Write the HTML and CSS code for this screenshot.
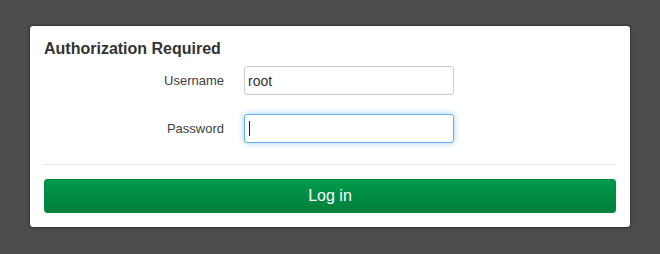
FILE: index.html
```html
<!DOCTYPE html>
<html>
<head>
<meta charset="utf-8">
<link rel="stylesheet" href="styles.css">
</head>
<body>
<div class="card">
  <h3 class="title">Authorization Required</h3>
  <div class="form">
    <label class="label" for="u">Username</label>
    <input class="field" id="u" type="text" value="root">
    <label class="label" for="p">Password</label>
    <div class="field-wrap">
      <input class="field focused" id="p" type="password">
      <span class="caret"></span>
    </div>
  </div>
  <div class="divider"></div>
  <button class="btn">Log in</button>
</div>
</body>
</html>
```
FILE: styles.css
```css
html, body {
  margin: 0;
  padding: 0;
}
body {
  background: #4c4c4c;
  font-family: "Liberation Sans", Arial, sans-serif;
  width: 660px;
  height: 254px;
  overflow: hidden;
}
.card {
  box-sizing: border-box;
  margin: 26px 0 0 30px;
  width: 600px;
  height: 201px;
  background: #fff;
  border-radius: 3px;
  box-shadow: 0 0 2px 1px rgba(0,0,0,0.35);
  padding: 13px 14px 13px;
}
.title {
  margin: 0;
  font-size: 16px;
  line-height: 20px;
  font-weight: bold;
  color: #333;
}
.form {
  margin-top: 7px;
  display: grid;
  grid-template-columns: 180px 210px;
  column-gap: 20px;
  row-gap: 19px;
  align-items: center;
}
.label {
  text-align: right;
  font-size: 13px;
  color: #404040;
}
.field-wrap {
  position: relative;
  height: 29px;
}
.field {
  box-sizing: border-box;
  display: block;
  width: 210px;
  height: 29px;
  margin: 0;
  padding: 0 3px;
  border: 1px solid #ccc;
  border-radius: 3px;
  font-family: "Liberation Sans", Arial, sans-serif;
  font-size: 14px;
  color: #333;
  background: #fff;
  outline: none;
}
.field.focused {
  border-color: #66afe9;
  box-shadow: 0 0 6px rgba(102,175,233,0.6);
}
.caret {
  position: absolute;
  left: 5px;
  top: 7px;
  width: 1px;
  height: 15px;
  background: #222;
}
.divider {
  margin-top: 21px;
  height: 1px;
  background: #e6e6e6;
}
.btn {
  display: block;
  box-sizing: border-box;
  margin-top: 14px;
  width: 100%;
  height: 34px;
  border: 1px solid #008c42;
  border-radius: 3px;
  background: linear-gradient(#009b4b, #007e3a);
  color: #fff;
  font-family: "Liberation Sans", Arial, sans-serif;
  font-size: 16px;
  padding: 0;
}
```
